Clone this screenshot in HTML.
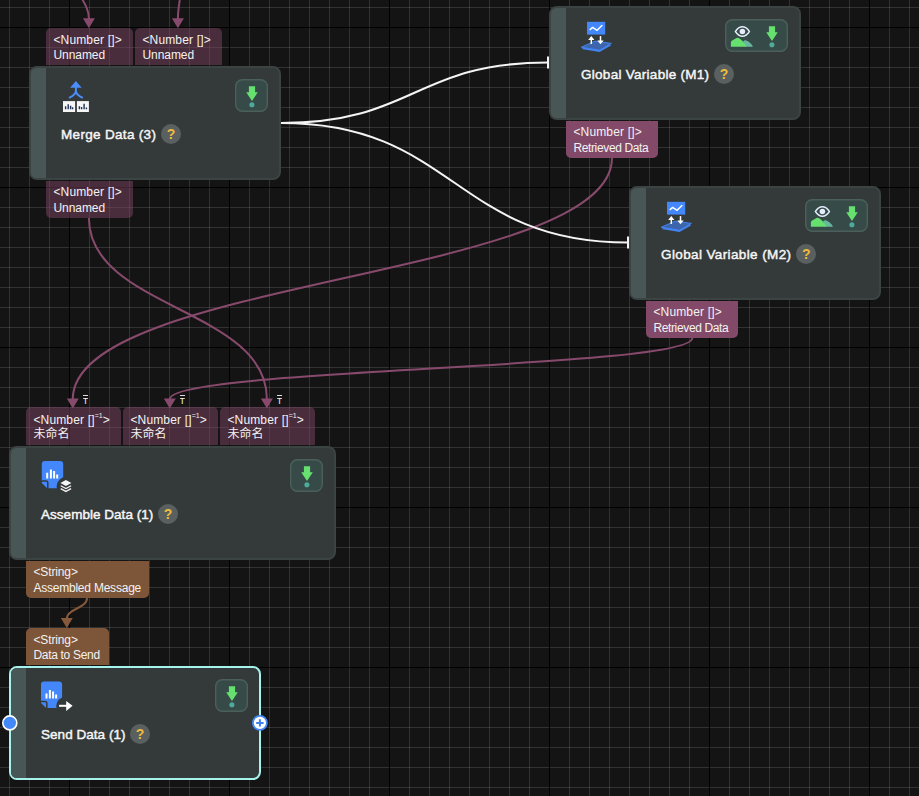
<!DOCTYPE html>
<html lang="en">
<head>
<meta charset="utf-8">
<title>Flow graph</title>
<style>
html,body{margin:0;padding:0;}
body{width:919px;height:796px;overflow:hidden;position:relative;background-color:#141414;
 font-family:"Liberation Sans","Noto Sans CJK SC",sans-serif;color:#f2f2f2;
 background-image:
  linear-gradient(to right,#000 1px,transparent 1px),
  linear-gradient(to bottom,#000 1px,transparent 1px),
  linear-gradient(to right,rgba(255,255,255,.13) 1px,transparent 1px),
  linear-gradient(to bottom,rgba(255,255,255,.13) 1px,transparent 1px);
 background-size:160px 160px,160px 160px,20px 20px,20px 20px;
 background-position:69px 0,0 27px,9px 0,0 7px;
}
.node{position:absolute;height:114px;background:#343a3a;border-radius:8px;box-sizing:border-box;border:2px solid #3b4343;}
.node .strip{position:absolute;left:0;top:0;bottom:0;width:14.8px;background:#485656;border-radius:5.5px 0 0 5.5px;}
.node .inner{position:absolute;left:-1px;top:-1px;right:-1px;bottom:-1px;}
.node.sel{border-color:#a6f2ec;}
.ico{position:absolute;left:30px;top:10px;}
.title{position:absolute;left:31px;top:59.2px;font-size:13.5px;line-height:18px;white-space:nowrap;color:#f6f6f6;-webkit-text-stroke:0.45px #f6f6f6;}
.help{position:absolute;top:57px;width:20px;height:20px;border-radius:50%;background:#5a605f;color:#eebb3c;
 font-weight:bold;font-size:14px;line-height:20.5px;text-align:center;}
.btn{position:absolute;top:12px;right:11.6px;height:33px;width:33px;box-sizing:border-box;background:#364a47;border-radius:7.5px;box-shadow:inset 0 0 0 1.4px #4c5f5b;}
.btn.wide{width:63px;}
.btn svg{position:absolute;left:0;top:0;}
.port{position:absolute;height:37.4px;box-sizing:border-box;font-size:12px;line-height:14.8px;padding:5px 0 0 7.4px;white-space:nowrap;color:#f2f2f2;overflow:hidden;}
.port.in{border-radius:5px 5px 0 0;padding-top:5px;}
.port.a{height:38.4px;padding-top:6px;}
.port.out{border-radius:0 0 5px 5px;height:37.7px;line-height:15.2px;padding-top:4.8px;}
.dim{background:rgba(128,70,100,.5);}
.lit{background:#824a68;}
.str{background:#7d5538;}
.port sup{font-size:7px;line-height:0;vertical-align:6px;letter-spacing:0;}
.port .cjk{position:relative;top:-1px;}
.tmark{position:absolute;font-size:9px;line-height:8px;height:8px;color:#f4f4f4;border-top:1px solid #e0e0e0;padding-top:.6px;width:5px;text-align:center;overflow:hidden;}
svg{position:absolute;left:0;top:0;}
</style>
</head>
<body>
<!-- Merge Data -->
<div class="port in dim" style="left:46px;top:28px;width:87px;"><span style="letter-spacing:0.16px">&lt;Number []&gt;</span><br><span style="letter-spacing:-0.05px">Unnamed</span></div>
<div class="port in dim" style="left:135px;top:28px;width:87px;"><span style="letter-spacing:0.16px">&lt;Number []&gt;</span><br><span style="letter-spacing:-0.05px">Unnamed</span></div>
<div class="port out dim" style="left:46px;top:180.6px;width:87px;"><span style="letter-spacing:0.16px">&lt;Number []&gt;</span><br><span style="letter-spacing:-0.05px">Unnamed</span></div>
<div class="node" style="left:29px;top:66px;width:252px;">
 <div class="strip"></div>
 <div class="inner">
 <svg class="ico" width="40" height="40" viewBox="0 0 40 40">
  <path d="M15.9,4 L21.7,10.7 H10.1z" fill="#4a8dfb"/>
  <path d="M15.9,10v5.5 M15.9,14.2 C15.2,17.4 12.4,19.3 9,20.9 M15.9,14.2 C16.6,17.4 19.4,19.3 22.8,20.9" stroke="#4a8dfb" stroke-width="2" fill="none"/>
  <rect x="3" y="24.1" width="12.1" height="10.9" fill="#f6f6f6"/>
  <rect x="16.9" y="24.1" width="12" height="10.9" fill="#f6f6f6"/>
  <path d="M5.6,32.3v-3.1 M8.2,32.3v-5.1 M10.6,32.3v-3.6 M12.6,32.3v-2.1" stroke="#1f3058" stroke-width="1.4"/>
  <path d="M19.4,32.3v-3.1 M21.6,32.3v-2.4 M24.1,32.3v-5.6 M26.4,32.3v-1.9" stroke="#1f3058" stroke-width="1.4"/>
 </svg>
 <div class="title" style="letter-spacing:0.32px">Merge Data (3)</div>
 <div class="help" style="left:131px;">?</div>
 <div class="btn"><svg width="33" height="33" viewBox="0 0 33 33"><path d="M13.9,7.2h6.2v6h2.7L17.0,22 11.2,13.2h2.7z" fill="#66e06e"/><circle cx="16.9" cy="25.8" r="2.55" fill="#4eab9c"/></svg></div>
 </div>
</div>
<!-- Global Variable M1 -->
<div class="port out lit" style="left:566px;top:120.6px;width:92px;"><span style="letter-spacing:0.16px">&lt;Number []&gt;</span><br><span style="letter-spacing:-0.36px">Retrieved Data</span></div>
<div class="node" style="left:549px;top:6px;width:252px;">
 <div class="strip"></div>
 <div class="inner">
 <svg class="ico" width="40" height="40" viewBox="0 0 40 40">
  <path d="M1.3,32 L15.1,25.9 L31.4,28.2 L19.6,35z" fill="#4384f3"/>
  <path d="M1.3,30.2 L15.1,24.1 L31.4,26.4 L19.6,33.2z" fill="#3c65ab" stroke="#4384f3" stroke-width="1" stroke-linejoin="round"/>
  <rect x="7" y="4.8" width="18.2" height="12.8" fill="#4487fb"/>
  <path d="M10.1,12.6 L12.6,10.4 17.1,13.3 21.9,8.4" stroke="#fff" stroke-width="1.4" fill="none" stroke-linecap="round" stroke-linejoin="round"/>
  <path d="M11.3,27v-5.5" stroke="#fff" stroke-width="1.5"/><path d="M8.2,22.9 L11.3,19 14.4,22.9z" fill="#fff"/>
  <path d="M20.5,19.1v5.5" stroke="#fff" stroke-width="1.5"/><path d="M17.4,23.4 L20.5,27.3 23.6,23.4z" fill="#fff"/>
 </svg>
 <div class="title" style="letter-spacing:0.28px">Global Variable (M1)</div>
 <div class="help" style="left:164px;">?</div>
 <div class="btn wide"><svg width="63" height="33" viewBox="0 0 63 33"><g transform="translate(0.5,0)"><path d="M17.6,22.2 C18.3,21.4 19.2,21 20.1,21.2 C23.4,22 26,24.6 27.5,27.7 H19.5z" fill="#68b8a0"/><path d="M5.4,27.8 V23.4 Q5.4,22.4 6.3,21.8 L11,19 Q12.3,18.3 13.6,19.3 C16.8,21.5 19.5,24.4 20.7,27.8z" fill="#66e06e"/><path d="M9.9,12.5 C11.9,9.4 14.2,7.75 16.9,7.75 C19.6,7.75 21.9,9.4 23.9,12.5 C21.9,15.6 19.6,17.25 16.9,17.25 C14.2,17.25 11.9,15.6 9.9,12.5z" stroke="#e4ecfb" stroke-width="1.4" fill="none"/><circle cx="16.9" cy="12.5" r="2.8" fill="#e4ecfb"/></g><path d="M43.9,7.2h6.2v6h2.7L47.0,22 41.2,13.2h2.7z" fill="#66e06e"/><circle cx="46.9" cy="25.8" r="2.55" fill="#4eab9c"/></svg></div>
 </div>
</div>
<!-- Global Variable M2 -->
<div class="port out lit" style="left:646px;top:300.6px;width:92px;"><span style="letter-spacing:0.16px">&lt;Number []&gt;</span><br><span style="letter-spacing:-0.36px">Retrieved Data</span></div>
<div class="node" style="left:629px;top:186px;width:252px;">
 <div class="strip"></div>
 <div class="inner">
 <svg class="ico" width="40" height="40" viewBox="0 0 40 40">
  <path d="M1.3,32 L15.1,25.9 L31.4,28.2 L19.6,35z" fill="#4384f3"/>
  <path d="M1.3,30.2 L15.1,24.1 L31.4,26.4 L19.6,33.2z" fill="#3c65ab" stroke="#4384f3" stroke-width="1" stroke-linejoin="round"/>
  <rect x="7" y="4.8" width="18.2" height="12.8" fill="#4487fb"/>
  <path d="M10.1,12.6 L12.6,10.4 17.1,13.3 21.9,8.4" stroke="#fff" stroke-width="1.4" fill="none" stroke-linecap="round" stroke-linejoin="round"/>
  <path d="M11.3,27v-5.5" stroke="#fff" stroke-width="1.5"/><path d="M8.2,22.9 L11.3,19 14.4,22.9z" fill="#fff"/>
  <path d="M20.5,19.1v5.5" stroke="#fff" stroke-width="1.5"/><path d="M17.4,23.4 L20.5,27.3 23.6,23.4z" fill="#fff"/>
 </svg>
 <div class="title" style="letter-spacing:0.38px">Global Variable (M2)</div>
 <div class="help" style="left:166.3px;">?</div>
 <div class="btn wide"><svg width="63" height="33" viewBox="0 0 63 33"><g transform="translate(0.5,0)"><path d="M17.6,22.2 C18.3,21.4 19.2,21 20.1,21.2 C23.4,22 26,24.6 27.5,27.7 H19.5z" fill="#68b8a0"/><path d="M5.4,27.8 V23.4 Q5.4,22.4 6.3,21.8 L11,19 Q12.3,18.3 13.6,19.3 C16.8,21.5 19.5,24.4 20.7,27.8z" fill="#66e06e"/><path d="M9.9,12.5 C11.9,9.4 14.2,7.75 16.9,7.75 C19.6,7.75 21.9,9.4 23.9,12.5 C21.9,15.6 19.6,17.25 16.9,17.25 C14.2,17.25 11.9,15.6 9.9,12.5z" stroke="#e4ecfb" stroke-width="1.4" fill="none"/><circle cx="16.9" cy="12.5" r="2.8" fill="#e4ecfb"/></g><path d="M43.9,7.2h6.2v6h2.7L47.0,22 41.2,13.2h2.7z" fill="#66e06e"/><circle cx="46.9" cy="25.8" r="2.55" fill="#4eab9c"/></svg></div>
 </div>
</div>
<!-- Assemble Data -->
<div class="tmark" style="left:82.8px;top:395px;">T</div>
<div class="tmark" style="left:179.5px;top:395px;">T</div>
<div class="tmark" style="left:276.7px;top:395px;">T</div>
<div class="port in dim a" style="left:26px;top:407px;width:95px;"><span style="letter-spacing:0.16px">&lt;Number []<sup>=1</sup>&gt;</span><br><span class="cjk">未命名</span></div>
<div class="port in dim a" style="left:123px;top:407px;width:94.5px;"><span style="letter-spacing:0.16px">&lt;Number []<sup>=1</sup>&gt;</span><br><span class="cjk">未命名</span></div>
<div class="port in dim a" style="left:220px;top:407px;width:95px;"><span style="letter-spacing:0.16px">&lt;Number []<sup>=1</sup>&gt;</span><br><span class="cjk">未命名</span></div>
<div class="port out str" style="left:26px;top:560.6px;width:123px;"><span style="letter-spacing:-0.12px">&lt;String&gt;</span><br><span style="letter-spacing:-0.22px">Assembled Message</span></div>
<div class="node" style="left:9px;top:446px;width:327px;">
 <div class="strip"></div>
 <div class="inner">
 <svg class="ico" width="40" height="40" viewBox="0 0 40 40">
  <path d="M1.8,7 Q1.8,3.9 4.9,3.9 H20.1 Q23.2,3.9 23.2,7 V31.2 H7.2 L1.8,26z" fill="#4487fb"/>
  <path d="M0.8,24.1 H6 Q7.8,24.1 7.8,25.9 V32" fill="none" stroke="#343a3a" stroke-width="1.5"/>
  <path d="M7.2,21.6v-5.8 M10.9,21.6v-9 M14.1,21.6v-7.5 M17.2,21.6v-4.2" stroke="#fff" stroke-width="2"/>
  <circle cx="26.3" cy="29.5" r="9.7" fill="#343a3a"/>
  <path d="M25.9,22.9 L31.4,25.9 25.9,28.9 20.4,25.9z" fill="#f6f6f6"/>
  <path d="M20.7,28.7 L25.9,31.5 31.1,28.7 M20.7,31.6 L25.9,34.4 31.1,31.6" stroke="#f0f0f0" stroke-width="1.3" fill="none"/>
 </svg>
 <div class="title" style="letter-spacing:0.03px">Assemble Data (1)</div>
 <div class="help" style="left:148px;">?</div>
 <div class="btn"><svg width="33" height="33" viewBox="0 0 33 33"><path d="M13.9,7.2h6.2v6h2.7L17.0,22 11.2,13.2h2.7z" fill="#66e06e"/><circle cx="16.9" cy="25.8" r="2.55" fill="#4eab9c"/></svg></div>
 </div>
</div>
<!-- Send Data -->
<div class="port in str" style="left:26px;top:628px;width:83px;"><span style="letter-spacing:-0.12px">&lt;String&gt;</span><br><span style="letter-spacing:-0.3px">Data to Send</span></div>
<div class="node sel" style="left:9px;top:666px;width:252px;">
 <div class="strip"></div>
 <div class="inner">
 <svg class="ico" width="40" height="40" viewBox="0 0 40 40">
  <path d="M1,7.6 Q1,4.5 4.1,4.5 H19 Q22.1,4.5 22.1,7.6 V30.9 H6.2 L1,25.9z" fill="#4487fb"/>
  <path d="M0,24.4 H5 Q6.8,24.4 6.8,26.2 V32" fill="none" stroke="#343a3a" stroke-width="1.5"/>
  <path d="M6.5,21.6v-5.2 M9.9,21.6v-8.5 M13.1,21.6v-7 M16.1,21.6v-4" stroke="#fff" stroke-width="2"/>
  <circle cx="25.3" cy="29" r="9.1" fill="#343a3a"/>
  <path d="M19.1,28.8h8" stroke="#fff" stroke-width="2"/>
  <path d="M26.2,23.9 L32.6,28.8 26.2,33.9z" fill="#fff"/>
 </svg>
 <div class="title" style="letter-spacing:0.04px">Send Data (1)</div>
 <div class="help" style="left:120px;">?</div>
 <div class="btn"><svg width="33" height="33" viewBox="0 0 33 33"><path d="M13.9,7.2h6.2v6h2.7L17.0,22 11.2,13.2h2.7z" fill="#66e06e"/><circle cx="16.9" cy="25.8" r="2.55" fill="#4eab9c"/></svg></div>
 </div>
</div>
<svg width="919" height="796" viewBox="0 0 919 796" fill="none">
 <g stroke="#874a6c" stroke-width="2" fill="none">
  <path d="M81,-3 C85,4 88.9,10 88.9,19"/>
  <path d="M180.2,-3 C179,5 177.9,11 177.9,19"/>
  <path d="M88.9,218 C88.9,308.5 266.9,308.5 266.9,399"/>
  <path d="M612,158 C612,278.5 72.8,278.5 72.8,399"/>
  <path d="M692.3,338 C692.3,368.5 169.8,368.5 169.8,399"/>
 </g>
 <g fill="#874a6c">
  <path d="M82.9,18.2h12L88.9,28.2z"/>
  <path d="M171.9,18.2h12L177.9,28.2z"/>
  <path d="M260.9,398.4h12L266.9,408.4z"/>
  <path d="M66.8,398.4h12L72.8,408.4z"/>
  <path d="M163.8,398.4h12L169.8,408.4z"/>
 </g>
 <path d="M87,598 C87,608.5 66.8,608.5 66.8,619" stroke="#86593a" stroke-width="2"/>
 <path d="M60.8,618h12L66.8,628z" fill="#86593a"/>
 <g stroke="#f4f4f4" stroke-width="2">
  <path d="M281,123 C414.5,123 414.5,62.5 548,62.5"/>
  <path d="M281,123 C454.5,123 454.5,242.5 628,242.5"/>
  <path d="M548,56.5v12"/>
  <path d="M628,236.5v12"/>
 </g>
</svg>
<svg width="919" height="796" viewBox="0 0 919 796">
 <circle cx="9.8" cy="722.9" r="7" fill="#4488f8" stroke="#fff" stroke-width="1.6"/>
 <circle cx="259.9" cy="722.9" r="7" fill="#fff" stroke="#4488f8" stroke-width="1.8"/>
 <path d="M256.2,722.9h7.4 M259.9,719.2v7.4" stroke="#3f7fee" stroke-width="2"/>
</svg>
</body>
</html>
